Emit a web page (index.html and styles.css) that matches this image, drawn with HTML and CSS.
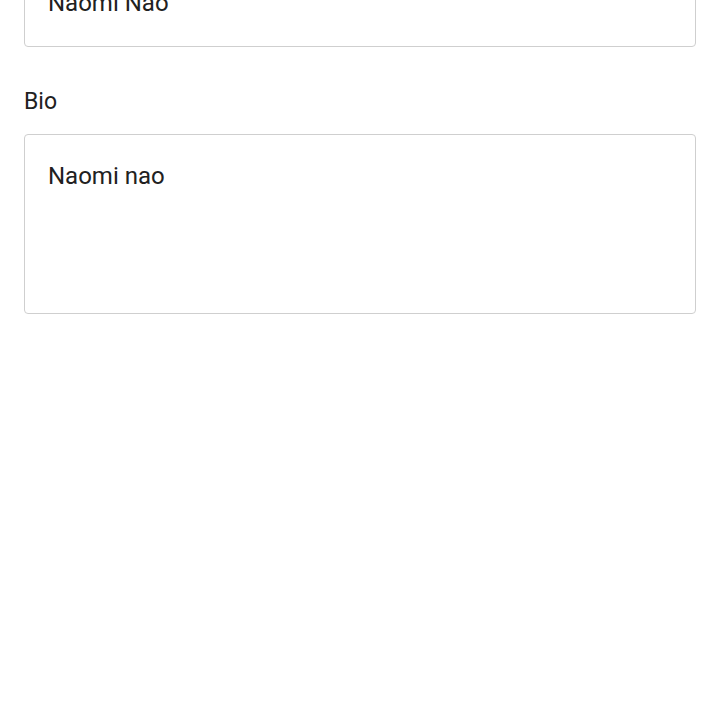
FILE: index.html
```html
<!DOCTYPE html>
<html>
<head>
<meta charset="utf-8">
<link rel="stylesheet" href="styles.css">
</head>
<body>
<form class="form">
  <div class="field field-first">
    <input class="input" type="text" value="Naomi Nao">
  </div>
  <div class="field">
    <label class="label">Bio</label>
    <textarea class="textarea">Naomi nao</textarea>
  </div>
</form>
</body>
</html>
```
FILE: styles.css
```css
html, body {
  margin: 0;
  padding: 0;
  background: #ffffff;
}
body {
  font-family: Roboto, "Noto Sans", sans-serif;
  color: #212121;
}
.form {
  display: flex;
  flex-direction: column;
  gap: 38px;
  padding: 0 24px;
  margin-top: -39px;
}
.field {
  display: flex;
  flex-direction: column;
  gap: 16px;
}
.label {
  font-size: 23px;
  line-height: 33px;
  color: #212121;
}
.input, .textarea {
  box-sizing: border-box;
  width: 100%;
  margin: 0;
  border: 1px solid #cfcfcf;
  border-radius: 4px;
  padding: 23px 23px 25px;
  font-family: Roboto, "Noto Sans", sans-serif;
  font-size: 24px;
  line-height: 36px;
  color: #212121;
  background: #fff;
  outline: none;
}
.input {
  height: 86px;
}
.textarea {
  height: 180px;
  resize: none;
  display: block;
}
```
